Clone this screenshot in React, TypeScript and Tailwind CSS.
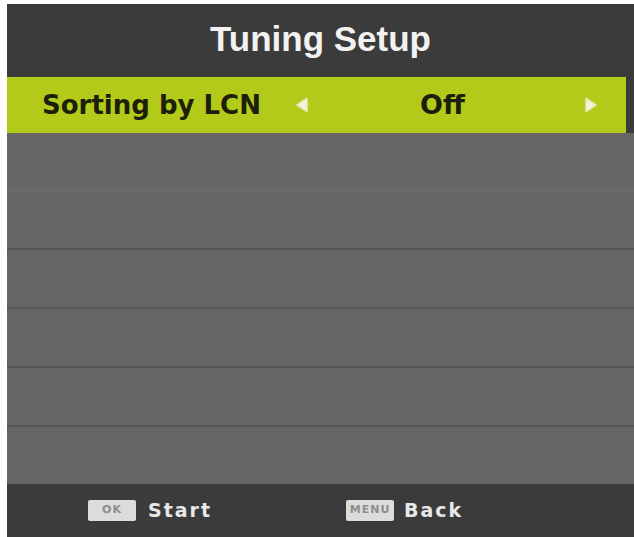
import React from "react";

const rows = [0, 1, 2, 3, 4, 5];

const Arrow: React.FC<{ dir: "left" | "right" }> = ({ dir }) => (
  <svg width="14" height="16" viewBox="0 0 14 16">
    {dir === "left" ? (
      <polygon points="12,1.5 12,14.5 2,8" fill="#f1f4d6" stroke="#e6ecc0" strokeWidth="1.5" strokeLinejoin="round" />
    ) : (
      <polygon points="2,1.5 2,14.5 12,8" fill="#f1f4d6" stroke="#e6ecc0" strokeWidth="1.5" strokeLinejoin="round" />
    )}
  </svg>
);

const Key: React.FC<{ label: string }> = ({ label }) => (
  <span className="inline-flex items-center justify-center h-[21px] w-[48px] bg-[#dcdcdc] rounded-[2px] text-[11px] font-bold text-[#8c8c8c] tracking-[1px]">
    {label}
  </span>
);

export default function App() {
  return (
    <div className="w-[634px] h-[537px] bg-white pt-[4px] pl-[7px] overflow-hidden">
      <div className="flex flex-col h-[533px] bg-[#3b3b3b]">
        {/* title */}
        <div className="h-[73px] flex items-center justify-center">
          <span
            className="text-[35px] font-bold text-[#f2f2f2] pb-[2px]"
            style={{ fontFamily: '"Liberation Sans", Arial, sans-serif' }}
          >
            Tuning Setup
          </span>
        </div>

        {/* selected row */}
        <div
          className="h-[56px] mr-[8px] bg-[#b4ca1b] flex items-center text-[#1c1f0a] font-bold text-[26px]"
          style={{ fontFamily: '"DejaVu Sans", Verdana, sans-serif' }}
        >
          <span className="pl-[35px] w-[288px]">Sorting by LCN</span>
          <Arrow dir="left" />
          <span className="flex-1 text-center pr-[8px] text-[27px]">Off</span>
          <span className="pr-[28px] flex">
            <Arrow dir="right" />
          </span>
        </div>

        {/* empty list */}
        <div className="flex flex-col bg-[#666666] h-[351px]">
          {rows.map((r) => (
            <div
              key={r}
              className={
                r === 5
                  ? "flex-1"
                  : r === 0
                  ? "flex-1 border-b border-[#707070]"
                  : "flex-1 border-b-2 border-[#575757]"
              }
            />
          ))}
        </div>

        {/* footer */}
        <div
          className="flex-1 flex items-center text-[#e8e8e8] font-bold text-[19px] tracking-[2px]"
          style={{ fontFamily: '"DejaVu Sans", Verdana, sans-serif' }}
        >
          <div className="flex items-center gap-[12px] ml-[81px]">
            <Key label="OK" />
            <span>Start</span>
          </div>
          <div className="flex items-center gap-[10px] ml-[134px]">
            <Key label="MENU" />
            <span>Back</span>
          </div>
        </div>
      </div>
    </div>
  );
}
